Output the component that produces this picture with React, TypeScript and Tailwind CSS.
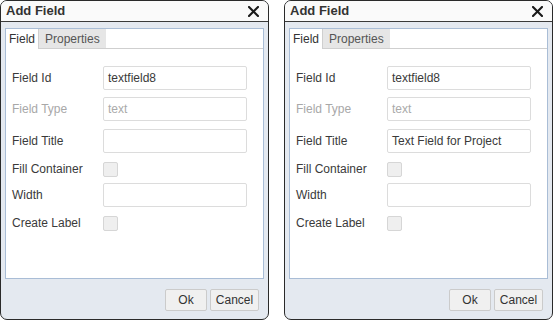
import React from 'react';

type Row =
  | { kind: 'input'; label: string; value?: string; disabled?: boolean; mt: string }
  | { kind: 'check'; label: string; mt: string };

const CloseIcon = () => (
  <svg width="11" height="11" viewBox="0 0 11 11" className="block">
    <path d="M1 1L10 10M10 1L1 10" stroke="#1a1a1a" strokeWidth="2.1" strokeLinecap="square" />
  </svg>
);

const FieldRow = ({ row }: { row: Row }) => (
  <div className={`flex h-[24px] items-center ${row.mt}`}>
    <div
      className={`w-[91px] shrink-0 text-[12px] ${
        row.kind === 'input' && row.disabled ? 'text-[#a8a8a8]' : 'text-[#3a3a3a]'
      }`}
    >
      {row.label}
    </div>
    {row.kind === 'input' ? (
      <div
        className={`flex h-[24px] w-[144px] items-center rounded-[2px] border border-[#dcdcdc] bg-white px-[4px] text-[12px] ${
          row.disabled ? 'text-[#aaa]' : 'text-[#3a3a3a]'
        }`}
      >
        {row.value}
      </div>
    ) : (
      <div className="h-[15px] w-[15px] rounded-[2px] border border-[#d6d6d6] bg-[#efefef]" />
    )}
  </div>
);

const Dialog = ({ title }: { title: string }) => {
  const rows: Row[] = [
    { kind: 'input', label: 'Field Id', value: 'textfield8', mt: 'mt-0' },
    { kind: 'input', label: 'Field Type', value: 'text', disabled: true, mt: 'mt-[7px]' },
    { kind: 'input', label: 'Field Title', value: title, mt: 'mt-[8px]' },
    { kind: 'check', label: 'Fill Container', mt: 'mt-[4px]' },
    { kind: 'input', label: 'Width', value: '', mt: 'mt-[2px]' },
    { kind: 'check', label: 'Create Label', mt: 'mt-[4px]' },
  ];

  return (
    <div className="flex h-[320px] w-[269px] flex-col overflow-hidden rounded-[7px] border border-[#2a2a2a] bg-[#e4e9f0]">
      <div className="flex h-[21px] shrink-0 items-center justify-between border-b border-[#3a3a3a] bg-[#fafafa] pl-[5px] pr-[9px]">
        <span className="text-[13px] font-bold text-[#333]">Add Field</span>
        <CloseIcon />
      </div>
      <div className="px-[4px] pt-[6px]">
        <div className="flex h-[251px] flex-col border border-[#a9bdd6] bg-white">
          <div className="flex h-[20px] shrink-0">
            <div className="flex items-center border-r border-[#cfcfcf] bg-white px-[3px] text-[12px] text-[#333]">
              Field
            </div>
            <div className="flex items-center border-b border-[#cfcfcf] bg-[#e6e6e6] px-[6px] text-[12px] text-[#555]">
              Properties
            </div>
            <div className="flex-1 border-b border-[#cfcfcf]" />
          </div>
          <div className="flex flex-col pl-[6px] pt-[17px]">
            {rows.map((r) => (
              <FieldRow key={r.label} row={r} />
            ))}
          </div>
        </div>
      </div>
      <div className="flex flex-1 items-start justify-end gap-[3px] pr-[9px] pt-[10px]">
        <button className="h-[22px] w-[42px] rounded-[2px] border border-[#cbcbcb] bg-[#f0f0f0] text-[12px] text-[#333]">
          Ok
        </button>
        <button className="h-[22px] w-[49px] rounded-[2px] border border-[#cbcbcb] bg-[#f0f0f0] text-[12px] text-[#333]">
          Cancel
        </button>
      </div>
    </div>
  );
};

export default function App() {
  return (
    <div className="flex h-[320px] w-[553px] gap-[15px] bg-white font-['Liberation_Sans',Arial,sans-serif]">
      <Dialog title="" />
      <Dialog title="Text Field for Project" />
    </div>
  );
}
